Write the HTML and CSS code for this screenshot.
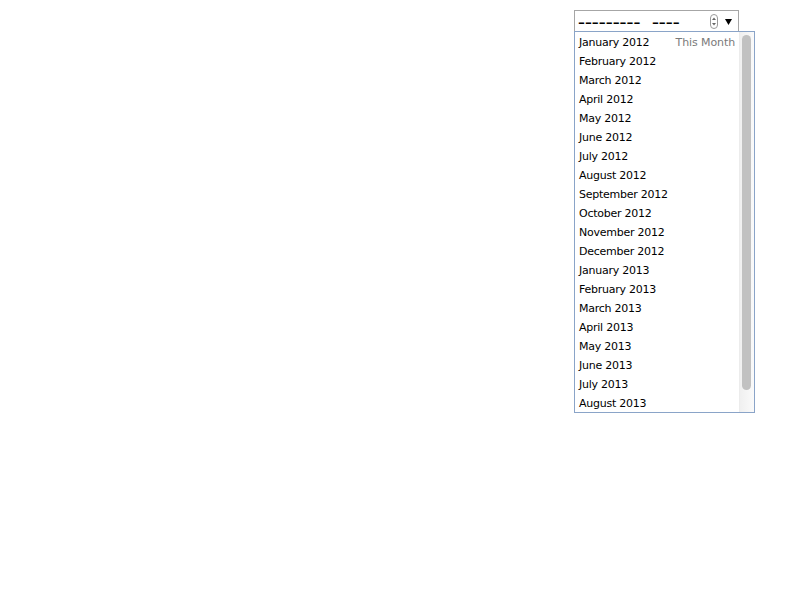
FILE: index.html
```html
<!DOCTYPE html>
<html>
<head>
<meta charset="utf-8">
<link rel="stylesheet" href="styles.css">
</head>
<body>
<div class="page">
  <div class="picker">
    <div class="field">
      <span class="value"><span class="dashes">---------&nbsp;&nbsp;----</span></span>
      <span class="spin">
        <svg width="8" height="15" viewBox="0 0 8 15"><rect x="0.5" y="0.5" width="7" height="14" rx="3.5" fill="#fff" stroke="#9a9a9a"/><path d="M2 6 L4 3.5 L6 6 Z" fill="#666"/><path d="M2 9 L4 11.5 L6 9 Z" fill="#666"/></svg>
      </span>
      <span class="caret">
        <svg width="7" height="6" viewBox="0 0 7 6"><path d="M0 0 L7 0 L3.5 6 Z" fill="#000"/></svg>
      </span>
    </div>
    <div class="popup">
      <ul class="list">
        <li><span>January 2012</span><span class="hint">This Month</span></li>
        <li>February 2012</li>
        <li>March 2012</li>
        <li>April 2012</li>
        <li>May 2012</li>
        <li>June 2012</li>
        <li>July 2012</li>
        <li>August 2012</li>
        <li>September 2012</li>
        <li>October 2012</li>
        <li>November 2012</li>
        <li>December 2012</li>
        <li>January 2013</li>
        <li>February 2013</li>
        <li>March 2013</li>
        <li>April 2013</li>
        <li>May 2013</li>
        <li>June 2013</li>
        <li>July 2013</li>
        <li>August 2013</li>
      </ul>
      <div class="track"><div class="thumb"></div></div>
    </div>
  </div>
</div>
</body>
</html>
```
FILE: styles.css
```css
html, body {
  margin: 0;
  padding: 0;
  background: #fff;
}
.page {
  padding: 10px 0 0 574px;
}
.picker {
  position: relative;
  width: 181px;
  font-family: "DejaVu Sans", Verdana, sans-serif;
  font-size: 11px;
}
.field {
  box-sizing: border-box;
  width: 165px;
  height: 22px;
  border: 1px solid #a6a6a6;
  display: flex;
  align-items: center;
  padding-left: 3px;
  padding-right: 6px;
  background: #fff;
}
.value {
  flex: 1;
  padding-top: 3px;
  line-height: 1;
  overflow: visible;
}
.dashes {
  display: inline-block;
  font-family: "Liberation Sans", Arial, sans-serif;
  font-size: 13px;
  font-weight: bold;
  color: #000;
  white-space: nowrap;
  transform: scaleX(1.6);
  transform-origin: left center;
}
.spin {
  display: flex;
  margin-right: 7px;
}
.caret {
  display: flex;
  margin-top: 1px;
}
.popup {
  box-sizing: border-box;
  width: 181px;
  height: 382px;
  border: 1px solid #8aa4c8;
  margin-top: -1px;
  display: flex;
  overflow: hidden;
  background: #fff;
}
.list {
  list-style: none;
  margin: 0;
  padding: 1px 0 0 0;
  flex: 1;
  min-width: 0;
}
.list li {
  height: 19px;
  line-height: 19px;
  padding: 0 4px;
  display: flex;
  justify-content: space-between;
  color: #000;
  letter-spacing: -0.25px;
  white-space: nowrap;
}
.hint {
  color: #7a7a7a;
  letter-spacing: -0.1px;
}
.track {
  width: 15px;
  flex: none;
  box-sizing: border-box;
  border-left: 1px solid #ececec;
  background: linear-gradient(to right, #f0f0f0, #fafafa);
  padding: 3px 2px 0 2px;
}
.thumb {
  width: 9px;
  height: 355px;
  border-radius: 5px;
  background: #c1c1c1;
}
```
